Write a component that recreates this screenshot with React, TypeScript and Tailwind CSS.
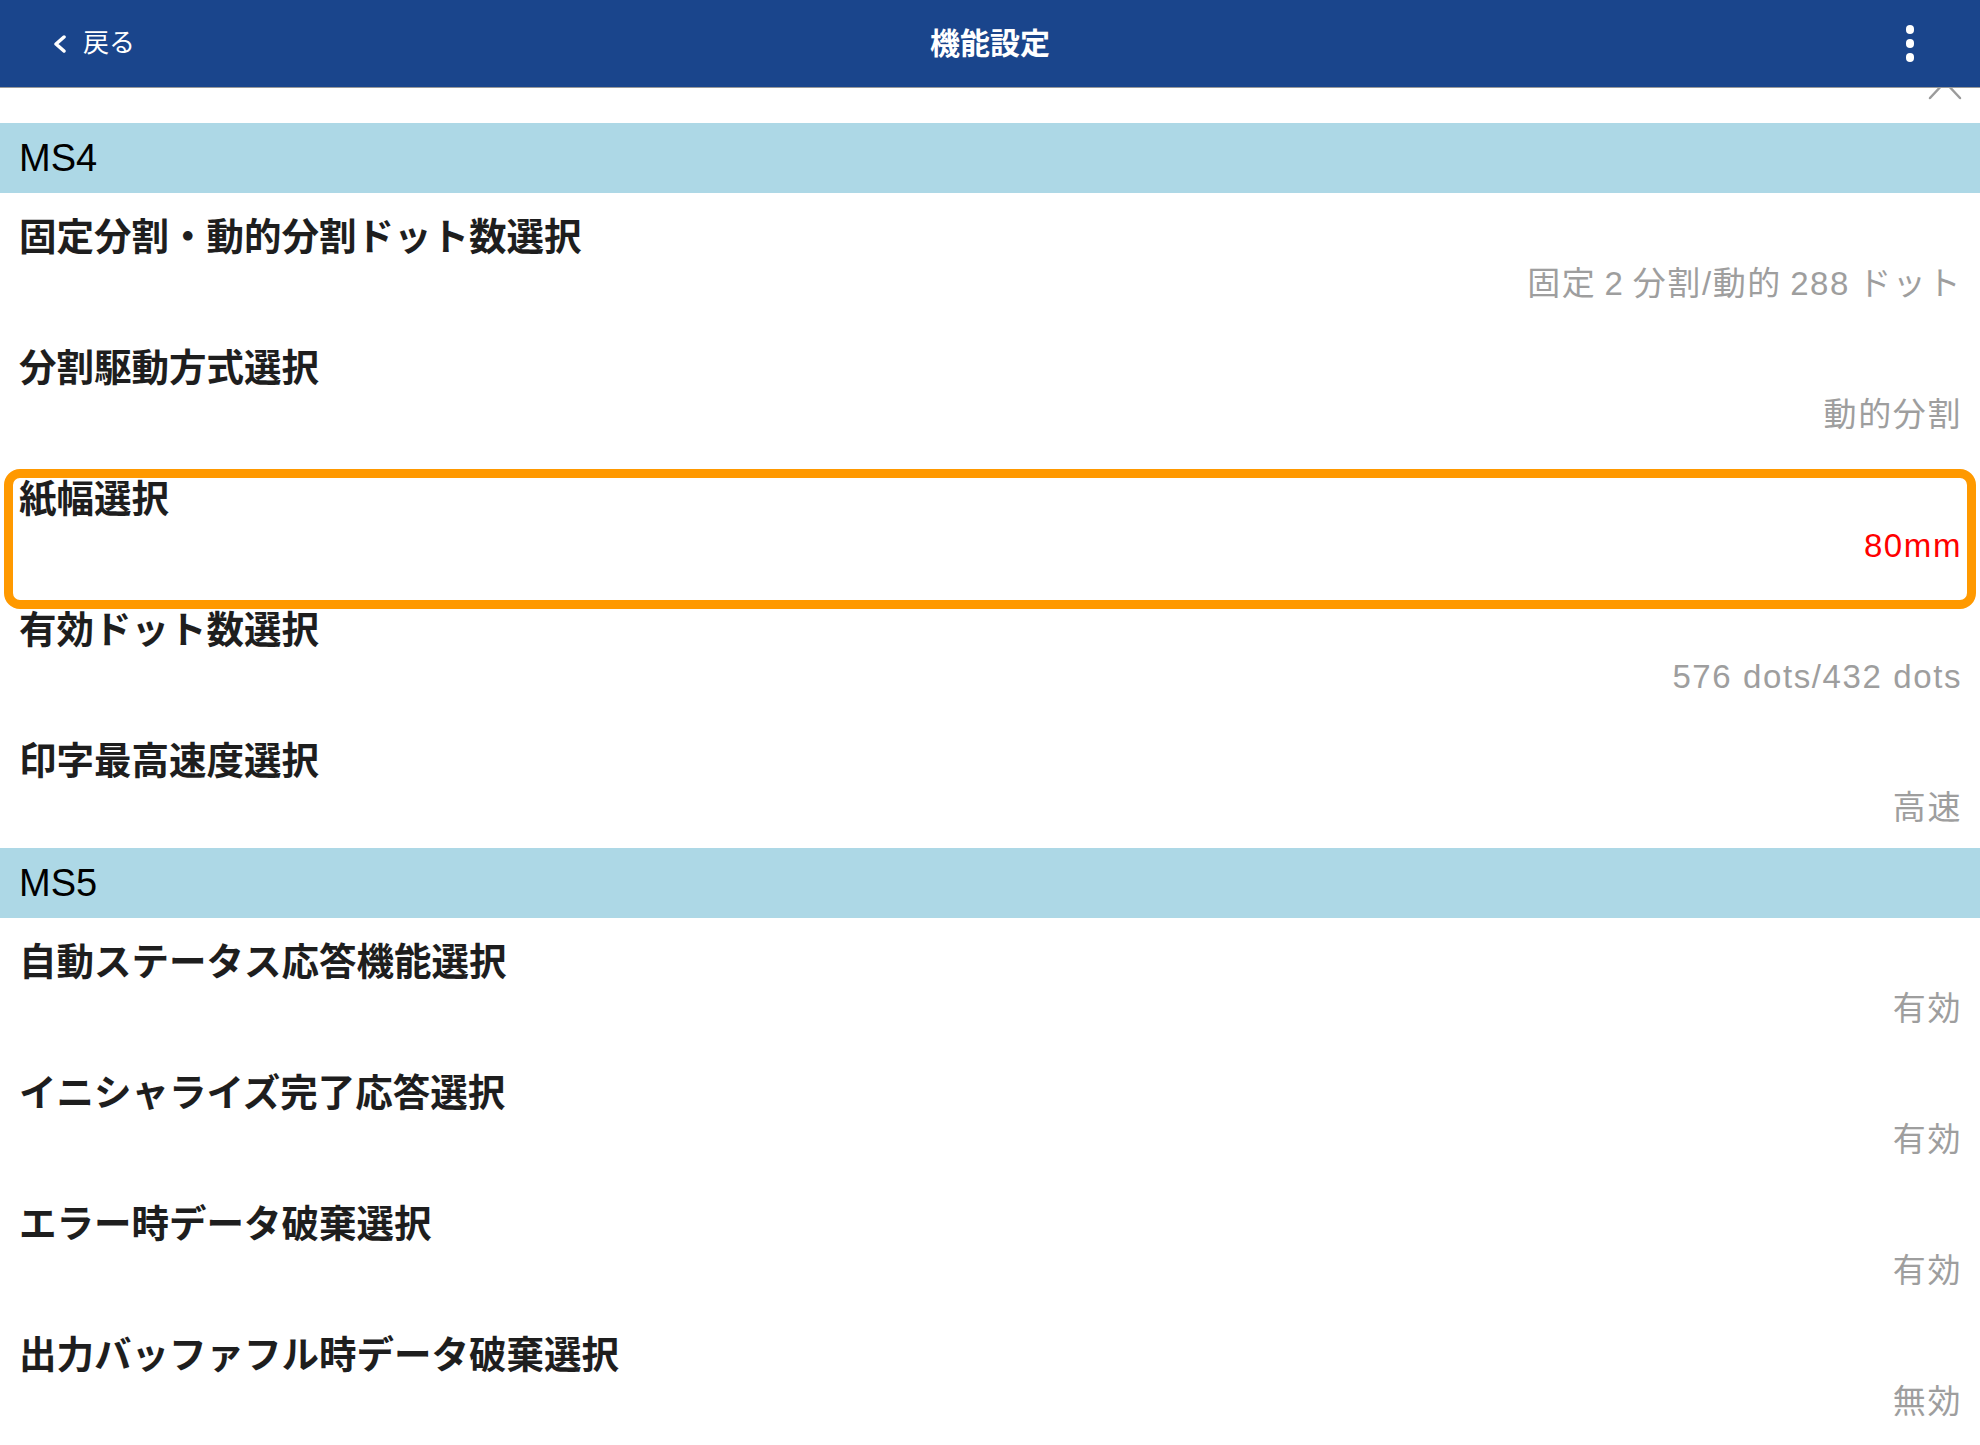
type Item = { label: string; value: string; highlight?: boolean };

const sections: { title: string; items: Item[] }[] = [
  {
    title: "MS4",
    items: [
      { label: "固定分割・動的分割ドット数選択", value: "固定\u20092\u2009分割/動的\u2009288\u2009ドット" },
      { label: "分割駆動方式選択", value: "動的分割" },
      { label: "紙幅選択", value: "80mm", highlight: true },
      { label: "有効ドット数選択", value: "576 dots/432 dots" },
      { label: "印字最高速度選択", value: "高速" },
    ],
  },
  {
    title: "MS5",
    items: [
      { label: "自動ステータス応答機能選択", value: "有効" },
      { label: "イニシャライズ完了応答選択", value: "有効" },
      { label: "エラー時データ破棄選択", value: "有効" },
      { label: "出力バッファフル時データ破棄選択", value: "無効" },
    ],
  },
];

const jp = { fontFamily: 'Roboto, "Noto Sans CJK JP", sans-serif' };
const latin = { fontFamily: '"Liberation Sans", "Noto Sans CJK JP", sans-serif' };

function Row({ item }: { item: Item }) {
  return (
    <div className="relative flex h-[131px] flex-col pt-[22px]">
      <p className="pl-[19px] text-[37.5px] font-bold leading-[44px] text-[#1e1e1e]">{item.label}</p>
      <p
        className={`mt-[5px] pr-[18px] text-right text-[33px] leading-[40px] tracking-[1.6px] ${
          item.highlight ? "text-[#ff0000]" : "text-[#9e9e9e]"
        }`}
        style={latin}
      >
        {item.value}
      </p>
      {item.highlight && (
        <div className="pointer-events-none absolute left-[4px] right-[4px] top-[14px] h-[140px] rounded-[16px] border-[9px] border-[#ff9900]" />
      )}
    </div>
  );
}

export default function App() {
  return (
    <div className="relative min-h-[1445px] overflow-hidden bg-white" style={jp}>
      <header className="relative z-10 flex h-[88px] items-center justify-between border-b border-[#9a9a9a] bg-[#1a458c] text-white">
        <button type="button" className="flex items-center gap-[14px] pl-[51px] text-[26px]">
          <svg width="18" height="18" viewBox="0 0 18 18" fill="none" stroke="white" strokeWidth="3.5" strokeLinecap="round" strokeLinejoin="round">
            <polyline points="13,2 5,9 13,16" />
          </svg>
          戻る
        </button>
        <h1 className="absolute left-1/2 -translate-x-1/2 text-[30px] font-bold">機能設定</h1>
        <div className="mr-[66px] flex flex-col items-center gap-[5px]">
          <span className="h-[9px] w-[8px] rounded-full bg-white" />
          <span className="h-[9px] w-[8px] rounded-full bg-white" />
          <span className="h-[9px] w-[8px] rounded-full bg-white" />
        </div>
      </header>

      <svg
        className="absolute right-[18px] top-[78px]"
        width="34"
        height="22"
        viewBox="0 0 34 22"
        fill="none"
        stroke="#9b9b9b"
        strokeWidth="2.5"
        strokeLinecap="round"
      >
        <polyline points="2,20 17,4 32,20" />
      </svg>

      <div className="pt-[35px]">
        {sections.map((s) => (
          <section key={s.title}>
            <div className="flex h-[70px] items-center bg-[#add8e6] pl-[19px] text-[38px] text-black" style={latin}>
              {s.title}
            </div>
            {s.items.map((item) => (
              <Row key={item.label} item={item} />
            ))}
          </section>
        ))}
      </div>
    </div>
  );
}
